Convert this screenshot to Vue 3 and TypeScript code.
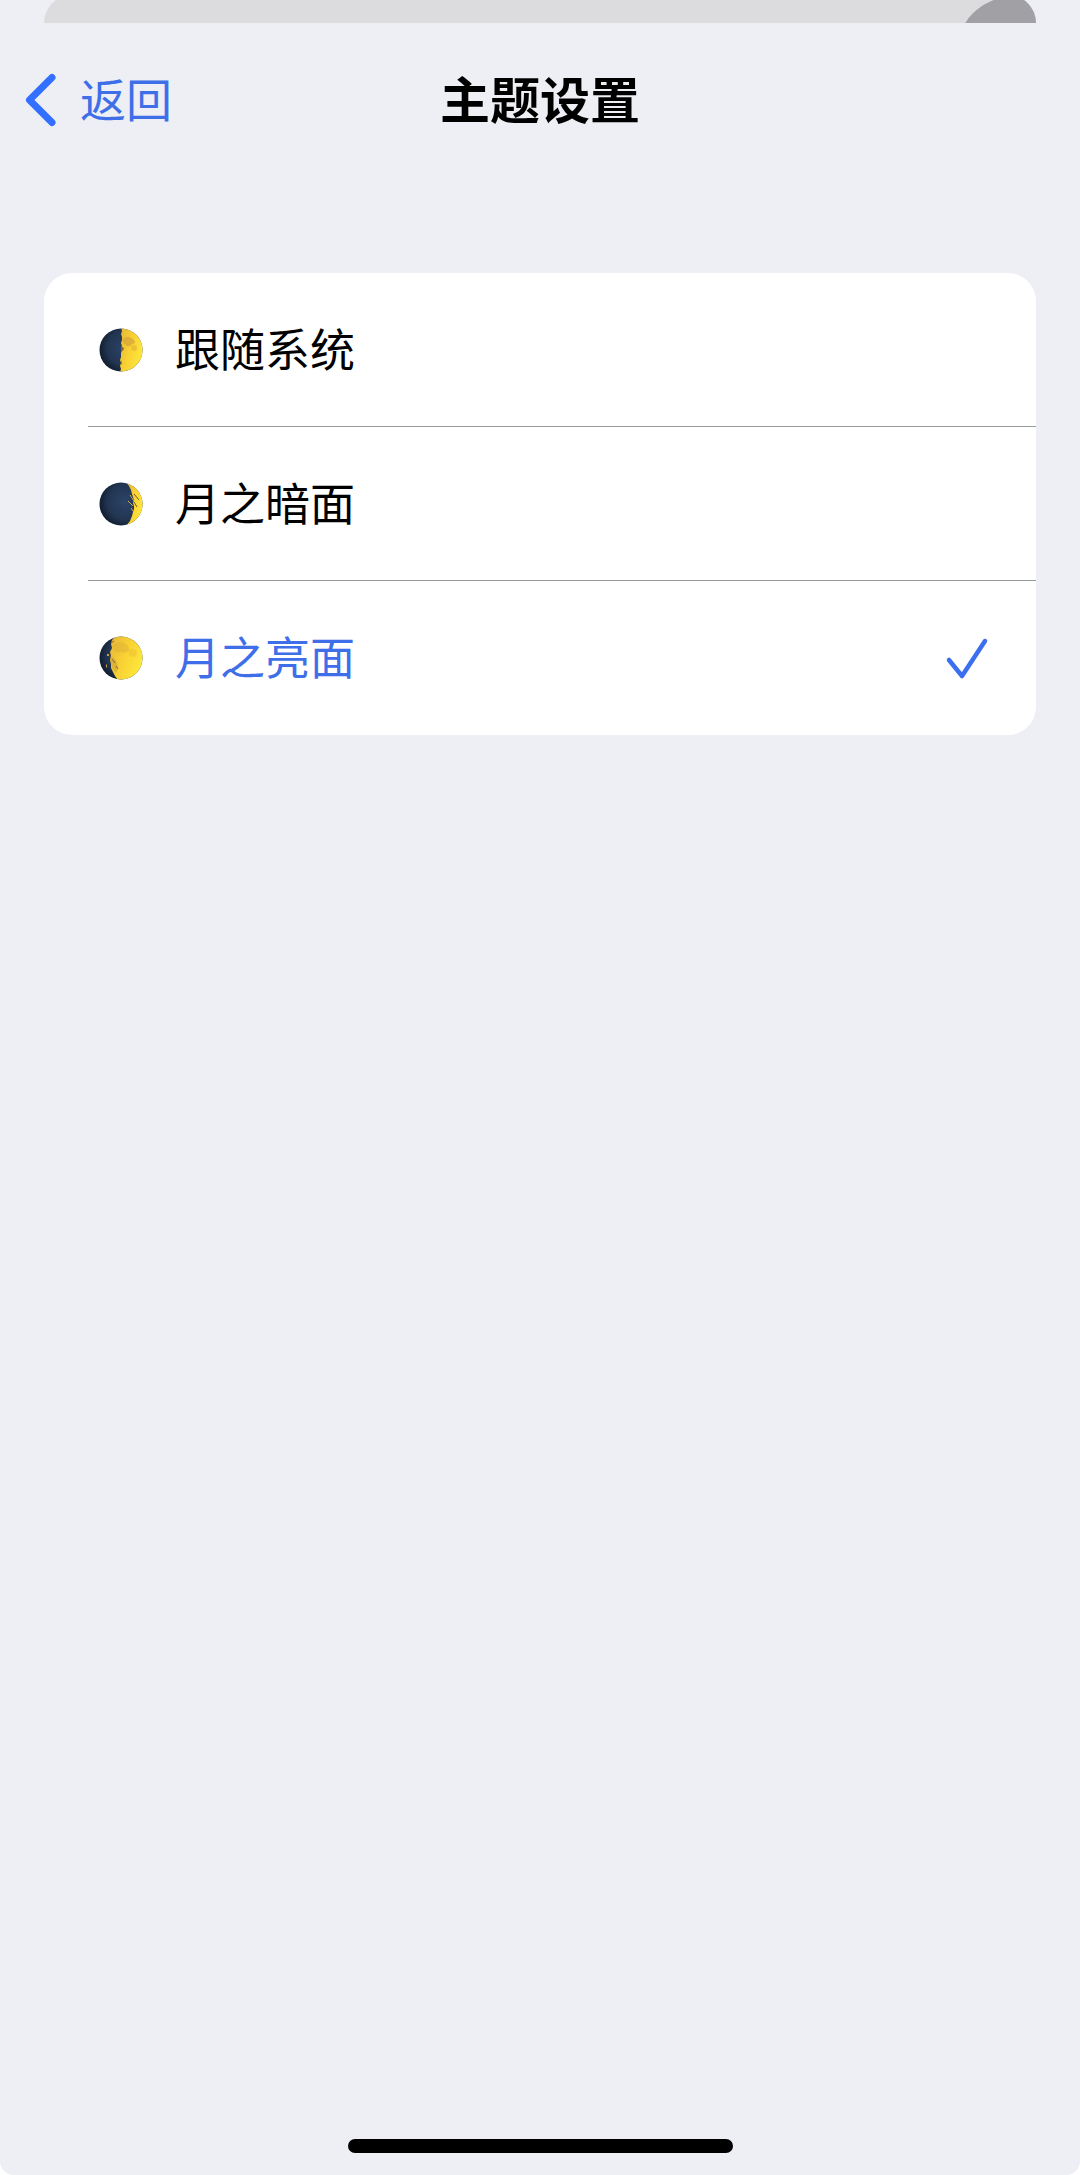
<script setup lang="ts">
import { ref } from 'vue'

type Phase = 'half' | 'crescent' | 'gibbous'

interface ThemeOption {
  value: string
  label: string
  phase: Phase
}

const options: ThemeOption[] = [
  { value: 'system', label: '跟随系统', phase: 'half' },
  { value: 'dark', label: '月之暗面', phase: 'crescent' },
  { value: 'light', label: '月之亮面', phase: 'gibbous' },
]

const selected = ref('light')

// Lit part of the disc, bounded on the left by a ragged terminator
const litArea: Record<Phase, string> = {
  half: 'M22 0 L23 3 L22 6 L23 9 L23 12 L22 15 L23 18 L22 20 L23 22 L22 25 L22 29 L21 32 L22 35 L21 38 L22 41 L21 44 H44 V0 Z',
  crescent: 'M27 0 L30 4 L32 8 L33 12 L34 15 L35 18 L34 21 L35 24 L35 27 L34 30 L33 34 L31 39 L27 44 H44 V0 Z',
  gibbous: 'M17 0 L13 4 L12 8 L13 12 L11 16 L12 20 L11 24 L12 28 L12 32 L14 36 L16 40 L19 44 H44 V0 Z',
}
</script>

<template>
  <div class="page">
    <div class="underlay" aria-hidden="true">
      <div class="underlay-card">
        <svg class="underlay-badge" width="120" height="28" viewBox="0 0 120 28">
          <circle cx="96" cy="57" r="55" fill="#a0a0a5" />
        </svg>
      </div>
    </div>

    <header class="bar">
      <button class="back" type="button">
        <svg width="32" height="54" viewBox="0 0 32 54" fill="none" aria-hidden="true">
          <path d="M27 4.500 L4.500 27 L27 49.500" stroke="#3370ff" stroke-width="7" stroke-linecap="round" stroke-linejoin="round" />
        </svg>
        <span class="back-label">返回</span>
      </button>
      <h1 class="title">主题设置</h1>
    </header>

    <main class="content">
      <div class="card" role="radiogroup" aria-label="主题设置">
        <label
          v-for="option in options"
          :key="option.value"
          class="row"
          :class="{ active: option.value === selected }"
        >
          <input v-model="selected" class="radio" type="radio" name="theme" :value="option.value" />
          <svg class="moon" width="44" height="44" viewBox="0 0 44 44" aria-hidden="true">
            <defs>
              <clipPath :id="'disc-' + option.phase"><circle cx="22" cy="22" r="21.500" /></clipPath>
              <radialGradient :id="'dark-' + option.phase" cx="0.6" cy="0.45" r="0.62">
                <stop offset="0" stop-color="#2c4468" />
                <stop offset="0.65" stop-color="#223552" />
                <stop offset="1" stop-color="#101a2b" />
              </radialGradient>
              <linearGradient :id="'lit-' + option.phase" x1="0" y1="0" x2="1" y2="0.5">
                <stop offset="0" stop-color="#e3b43c" />
                <stop offset="0.5" stop-color="#f8d033" />
                <stop offset="1" stop-color="#fee63a" />
              </linearGradient>
            </defs>
            <g :clip-path="'url(#disc-' + option.phase + ')'">
              <rect width="44" height="44" :fill="'url(#dark-' + option.phase + ')'" />
              <path :d="litArea[option.phase]" :fill="'url(#lit-' + option.phase + ')'" />
              <g v-if="option.phase === 'half'">
                <path d="M24 11 q4 -4 8 -1 q4 1 4 5 q-3 1 -5 3 q-4 1 -5 -2 q-3 -1 -2 -5z" fill="#d3a03b" opacity="0.65" />
                <circle cx="35" cy="20" r="3" fill="#dba934" opacity="0.5" />
                <path d="M22 18 l3 2 l-1 3 l-2 -1z M22 32 l1 3 l-1 2z" fill="#806b3d" />
              </g>
              <g v-else-if="option.phase === 'crescent'">
                <path d="M35 12 l5 6 M35 20 l3 5" stroke="#6a5a30" stroke-width="1" fill="none" />
                <path d="M29 19 l5 5 M31 13 l4 6 M32 26 l2 3" stroke="#d5ad42" stroke-width="1" fill="none" />
              </g>
              <g v-else>
                <path d="M14 10 q5 -6 11 -3 q6 2 5 8 q-5 3 -8 1 q-6 3 -8 -6z" fill="#d9a935" opacity="0.4" />
                <circle cx="34" cy="17" r="4" fill="#e2b62f" opacity="0.35" />
                <path d="M11 20 q7 2 8 12 l-2 5 l-4 -5z" fill="#c79a3a" opacity="0.5" />
                <path d="M8 18 h2 v2 h-2z M7 29 l1 -1 v3 l-1 1z" fill="#c79c42" />
                <path d="M13 23 l3 4 M17 30 l2 3 M12 7 l3 -2" stroke="#80683a" stroke-width="1" fill="none" />
              </g>
            </g>
          </svg>
          <span class="label">{{ option.label }}</span>
          <svg v-if="option.value === selected" class="check" width="44" height="44" viewBox="0 0 44 44" fill="none" aria-hidden="true">
            <path d="M4 24 L17 40 L40 5" stroke="#3b6ff0" stroke-width="4.500" stroke-linecap="round" stroke-linejoin="round" />
          </svg>
        </label>
      </div>
    </main>

    <div class="home-indicator" aria-hidden="true"></div>
  </div>
</template>

<style>
body {
  margin: 0;
  background: #fff;
}
</style>

<style scoped>
.page {
  display: flex;
  flex-direction: column;
  box-sizing: border-box;
  min-height: 100vh;
  padding-bottom: 22px;
  border-radius: 0 0 14px 14px;
  background: #eeeff4;
  color: #000;
  font-family: "Noto Sans CJK SC", "Noto Sans", sans-serif;
  font-size: 45px;
  line-height: 64px;
}

.underlay {
  display: flex;
  align-items: flex-end;
  height: 23px;
  padding: 0 44px;
  overflow: hidden;
}

.underlay-card {
  display: flex;
  flex: 1;
  justify-content: flex-end;
  height: 28px;
  border-radius: 28px 28px 0 0;
  background: #dcdcde;
  overflow: hidden;
}

.underlay-badge {
  display: block;
}

.bar {
  display: grid;
  grid-template-columns: 1fr auto 1fr;
  align-items: center;
  height: 154px;
  padding: 0 25px;
}

.back {
  display: flex;
  align-items: center;
  justify-self: start;
  gap: 23px;
  padding: 0;
  border: 0;
  background: none;
  color: #3f6fe8;
  font: inherit;
  font-size: 46px;
  cursor: pointer;
}

.title {
  margin: 0;
  font-size: 50px;
  font-weight: 700;
}

.back-label,
.title {
  padding-bottom: 6px;
}

.content {
  flex: 1;
  padding: 96px 44px 44px;
}

.card {
  border-radius: 28px;
  background: #fff;
  overflow: hidden;
}

.row {
  display: flex;
  align-items: center;
  position: relative;
  box-sizing: border-box;
  height: 154px;
  margin-left: 44px;
  padding: 0 47px 0 11px;
  border-bottom: 1px solid #979a9b;
  cursor: pointer;
}

.row:last-child {
  border-bottom-color: transparent;
}

.row.active {
  color: #3f6fe8;
}

.radio {
  position: absolute;
  inset: 0;
  width: 100%;
  height: 100%;
  margin: 0;
  opacity: 0;
  cursor: pointer;
}

.moon {
  flex: none;
}

.label {
  flex: 1;
  margin-left: 32px;
  padding-bottom: 4px;
}

.check {
  flex: none;
}

.home-indicator {
  width: 385px;
  height: 14px;
  margin: 0 auto;
  border-radius: 7px;
  background: #000;
}
</style>
